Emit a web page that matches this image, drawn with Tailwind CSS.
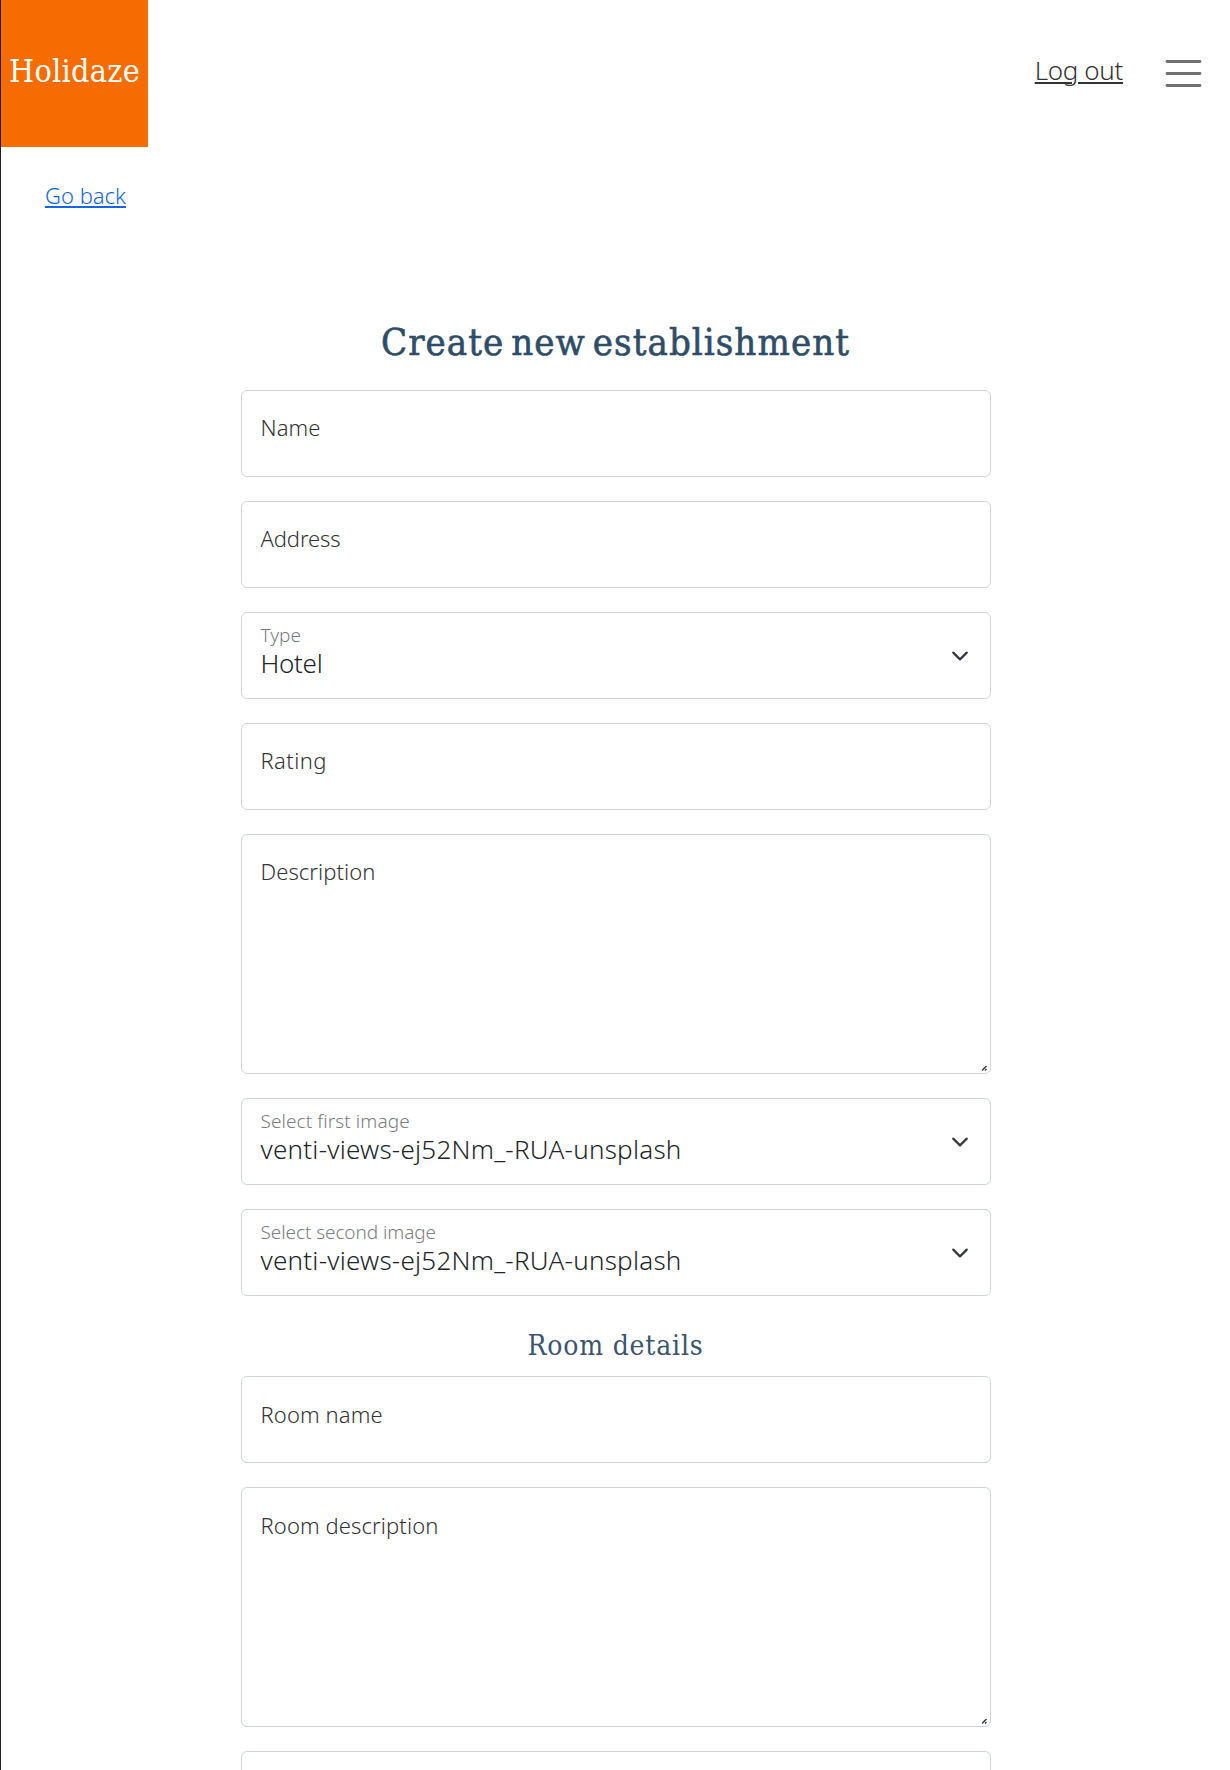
<!DOCTYPE html>
<html lang="en">
<head>
<meta charset="utf-8">
<title>Holidaze</title>
<script src="https://cdn.jsdelivr.net/npm/@tailwindcss/browser@4"></script>
</head>
<body class="h-[1770px] overflow-hidden border-l border-[#231f20] bg-white font-['Noto_Sans',sans-serif] font-light text-[#212529]">
<header class="flex h-[147px] items-start justify-between">
  <a class="flex size-[147px] items-center justify-center bg-[#f76c00] pb-[5px] font-['DejaVu_Serif_Condensed','DejaVu_Serif',serif] text-[32px] font-normal leading-10 tracking-[0.3px] text-white">Holidaze</a>
  <div class="flex items-start pr-[28px] pt-[54px]">
    <a class="mr-[42px] text-[26px] leading-8 tracking-[-0.35px] text-[#333] underline decoration-2 underline-offset-[2px]">Log out</a>
    <svg class="mt-[5px] h-[29px] w-[37px]" viewBox="0 0 37 29" stroke="#707070" stroke-width="2.8" stroke-linecap="round"><path d="M2 2.5H35M2 14.5H35M2 26.5H35"/></svg>
  </div>
</header>
<a class="ml-[44px] mt-[34px] block w-fit text-[22px] leading-7 text-[#1266e8] underline decoration-2 underline-offset-[2px]">Go back</a>

<main class="mx-auto mt-[109px] w-[750px]">
  <h1 class="text-center font-['DejaVu_Serif_Condensed','DejaVu_Serif',serif] text-[38px] font-normal leading-[48px] tracking-[1.05px] [word-spacing:-5px] [-webkit-text-stroke:0.6px_#2f4d68] text-[#2f4d68]">Create new establishment</h1>
  <div class="mt-6 flex flex-col gap-6">
    <div class="h-[87px] rounded-md border border-[#ced4da] px-[19px] pt-[22px] text-[22px] leading-7 tracking-[0.1px] text-[#333]">Name</div>
    <div class="h-[87px] rounded-md border border-[#ced4da] px-[19px] pt-[22px] text-[22px] leading-7 tracking-[-0.1px] text-[#333]">Address</div>
    <div class="flex h-[87px] items-start justify-between rounded-md border border-[#ced4da] pl-[19px] pr-[21px] pt-[11px]">
      <div>
        <div class="text-[19px] leading-[22px] text-[#7b7d80]">Type</div>
        <div class="mt-0.5 text-[26px] leading-[30px] tracking-[-0.3px]">Hotel</div>
      </div>
      <svg class="mt-[23px] size-[18px]" viewBox="0 0 16 16" fill="none" stroke="#343a40" stroke-width="2" stroke-linecap="round" stroke-linejoin="round"><path d="m2 5 6 6 6-6"/></svg>
    </div>
    <div class="h-[87px] rounded-md border border-[#ced4da] px-[19px] pt-[22px] text-[22px] leading-7 tracking-[0.4px] text-[#333]">Rating</div>
    <div class="relative h-[240px] rounded-md border border-[#ced4da] px-[19px] pt-[22px] text-[22px] leading-7 tracking-[0.07px] text-[#333]">Description
      <svg class="absolute bottom-[2px] right-[3px] size-[5px]" viewBox="0 0 5 5" stroke="#333" stroke-width="1.4"><path d="M0 4.5 4.5 0M3 4.5 4.5 3"/></svg>
    </div>
    <div class="flex h-[87px] items-start justify-between rounded-md border border-[#ced4da] pl-[19px] pr-[21px] pt-[11px]">
      <div>
        <div class="text-[19px] leading-[22px] tracking-[0.08px] text-[#7b7d80]">Select first image</div>
        <div class="mt-0.5 text-[26px] leading-[30px] tracking-[0.24px]">venti-views-ej52Nm_-RUA-unsplash</div>
      </div>
      <svg class="mt-[23px] size-[18px]" viewBox="0 0 16 16" fill="none" stroke="#343a40" stroke-width="2" stroke-linecap="round" stroke-linejoin="round"><path d="m2 5 6 6 6-6"/></svg>
    </div>
    <div class="flex h-[87px] items-start justify-between rounded-md border border-[#ced4da] pl-[19px] pr-[21px] pt-[11px]">
      <div>
        <div class="text-[19px] leading-[22px] tracking-[-0.08px] text-[#7b7d80]">Select second image</div>
        <div class="mt-0.5 text-[26px] leading-[30px] tracking-[0.24px]">venti-views-ej52Nm_-RUA-unsplash</div>
      </div>
      <svg class="mt-[23px] size-[18px]" viewBox="0 0 16 16" fill="none" stroke="#343a40" stroke-width="2" stroke-linecap="round" stroke-linejoin="round"><path d="m2 5 6 6 6-6"/></svg>
    </div>
  </div>
  <h2 class="mt-8 text-center font-['DejaVu_Serif_Condensed','DejaVu_Serif',serif] text-[28px] font-normal leading-9 tracking-[0.8px] text-[#3a5570]">Room details</h2>
  <div class="mt-3 flex flex-col gap-6">
    <div class="h-[87px] rounded-md border border-[#ced4da] px-[19px] pt-[23px] text-[22px] leading-7 tracking-[0.1px] text-[#333]">Room name</div>
    <div class="relative h-[240px] rounded-md border border-[#ced4da] px-[19px] pt-[23px] text-[22px] leading-7 tracking-[0.1px] text-[#333]">Room description
      <svg class="absolute bottom-[2px] right-[3px] size-[5px]" viewBox="0 0 5 5" stroke="#333" stroke-width="1.4"><path d="M0 4.5 4.5 0M3 4.5 4.5 3"/></svg>
    </div>
    <div class="h-[87px] rounded-md border border-[#ced4da]"></div>
  </div>
</main>
</body>
</html>
